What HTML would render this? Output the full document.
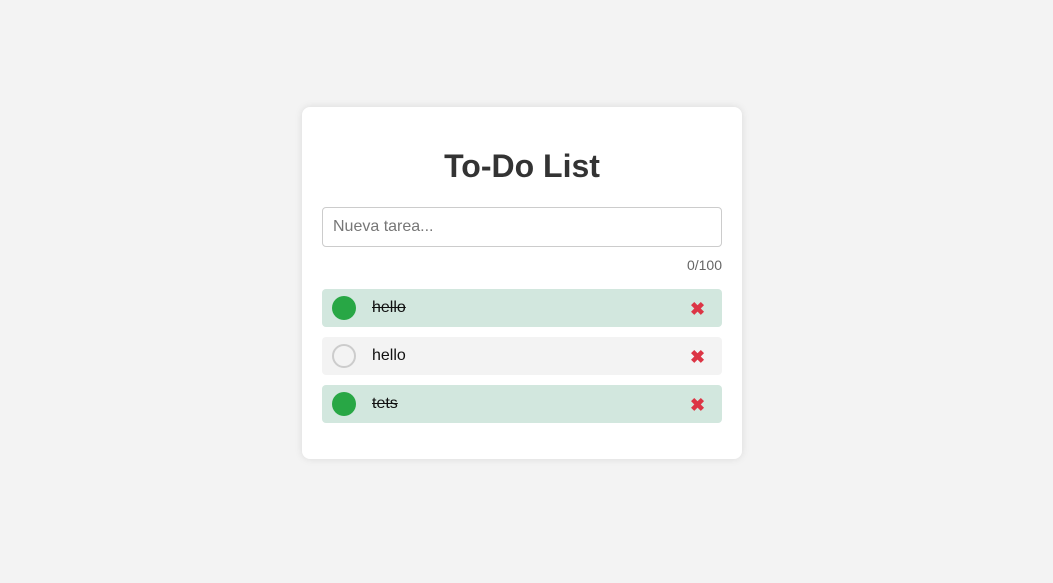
<!DOCTYPE html>
<html><head><style>
body{margin:0;background:#f3f3f3;font-family:"Liberation Sans",sans-serif;width:1053px;height:583px;position:relative}
.card{position:absolute;left:302px;top:107px;width:440px;height:352px;background:#fff;border-radius:8px;box-shadow:0 0 8px rgba(0,0,0,.1)}
h1{position:absolute;top:148px;left:302px;width:440px;margin:0;text-align:center;font-size:32px;line-height:36px;color:#333}
.inp{position:absolute;left:322px;top:207px;border:1px solid #ccc;border-radius:4px;box-sizing:border-box;width:400px;height:40px;padding-left:10px;line-height:38px;font-size:16px;color:#777}
.cnt{position:absolute;right:331px;top:257px;font-size:14px;color:#666}
.item{position:absolute;left:322px;width:400px;height:38px;border-radius:4px;background:#f3f3f3}
.item.done{background:#d2e7de}
.c{position:absolute;left:10px;top:7px;width:24px;height:24px;border-radius:50%;box-sizing:border-box;border:2px solid #ccc}
.done .c{background:#28a745;border:none}
.t{position:absolute;left:50px;top:10px;font-size:16px;color:#111}
.done .t{text-decoration:line-through}
.x{position:absolute;left:368px;top:10px;color:#dc3545;font-size:18px;font-weight:bold;line-height:20px}
</style></head><body>
<div class="card"></div>
<h1>To-Do List</h1>
<div class="inp">Nueva tarea...</div>
<div class="cnt">0/100</div>
<div class="item done" style="top:289px"><div class="c"></div><div class="t">hello</div><div class="x">✖</div></div>
<div class="item" style="top:337px"><div class="c"></div><div class="t">hello</div><div class="x">✖</div></div>
<div class="item done" style="top:385px"><div class="c"></div><div class="t">tets</div><div class="x">✖</div></div>
</body></html>
